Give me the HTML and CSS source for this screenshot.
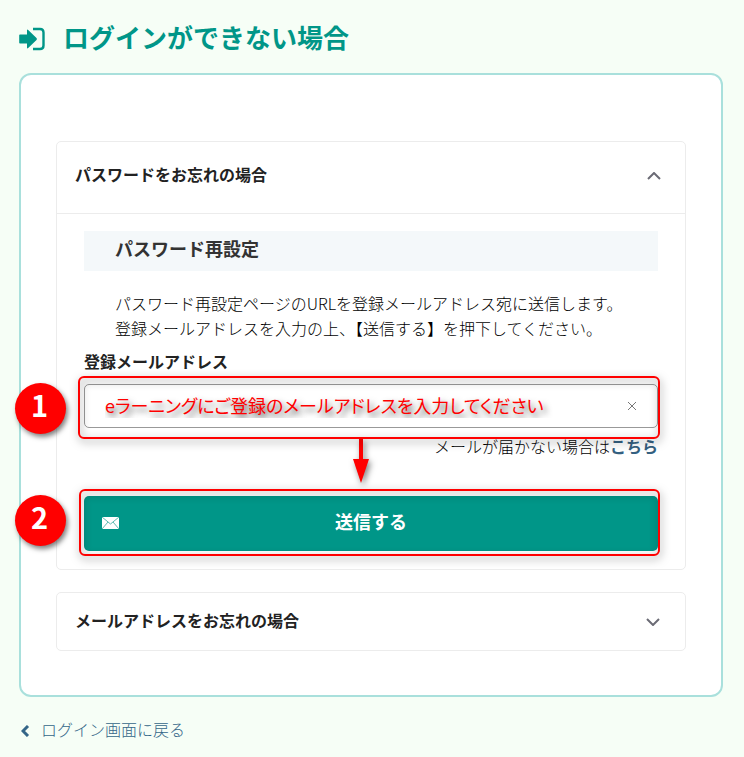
FILE: index.html
```html
<!DOCTYPE html>
<html lang="ja">
<head>
  <meta charset="UTF-8">
  <title>ログインができない場合</title>
  <meta name="viewport" content="width=device-width, initial-scale=1.0">
  <link rel="stylesheet" href="styles.css">
</head>
<body>
  <header class="page-header">
    <svg class="login-icon" viewBox="0 0 26 24" aria-hidden="true">
      <path d="M1 7.500h7V3.500q0-1.500 1.200-.5l8.300 8q.9 1 0 2l-8.300 8q-1.200 1-1.200-.5V16.500H1q-.8 0-.8-.8V8.300Q.2 7.500 1 7.500z" fill="#009688"/>
      <path d="M14 2h7q3.500 0 3.500 3.500v13q0 3.500-3.500 3.500H14" fill="none" stroke="#009688" stroke-width="2.400"/>
    </svg>
    <h1>ログインができない場合</h1>
  </header>
  <main class="card">
    <section class="item">
      <h2>
        <button type="button" class="item-head open" aria-expanded="true">
          パスワードをお忘れの場合
          <svg class="chevron" viewBox="0 0 14 8" aria-hidden="true"><path d="M1 7l6-6 6 6"/></svg>
        </button>
      </h2>
      <form class="item-body">
        <h3>パスワード再設定</h3>
        <p class="lead">パスワード再設定ページのURLを登録メールアドレス宛に送信します。<br>登録メールアドレスを入力の上、【送信する】を押下してください。</p>
        <label for="email">登録メールアドレス</label>
        <div class="field marked">
          <input type="email" id="email" placeholder="eラーニングにご登録のメールアドレスを入力してください">
          <button type="reset" class="clear" aria-label="クリア">
            <svg viewBox="0 0 10 10" aria-hidden="true"><path d="M1 1l8 8M9 1L1 9"/></svg>
          </button>
          <span class="badge">1</span>
          <svg class="arrow" viewBox="0 0 18 44" aria-hidden="true"><path d="M7 0h4v20h6L9 44 1 20h6z"/></svg>
        </div>
        <p class="help">メールが届かない場合は<a href="#">こちら</a></p>
        <div class="submit marked">
          <button type="button" class="send">
            <svg class="mail" viewBox="0 0 17 12" aria-hidden="true">
              <path d="M0 0h17v12H0z" fill="#fff"/>
              <path d="M0 0l8.500 7L17 0M0 12l6-7M17 12l-6-7" fill="none" stroke="#5fbcb3"/>
            </svg>
            送信する
          </button>
          <span class="badge">2</span>
        </div>
      </form>
    </section>
    <section class="item">
      <h2>
        <button type="button" class="item-head" aria-expanded="false">
          メールアドレスをお忘れの場合
          <svg class="chevron" viewBox="0 0 14 8" aria-hidden="true"><path d="M1 1l6 6 6-6"/></svg>
        </button>
      </h2>
    </section>
  </main>
  <footer>
    <a href="#" class="back">
      <svg viewBox="0 0 9 12" aria-hidden="true"><path d="M7 1L2 6l5 5"/></svg>
      ログイン画面に戻る
    </a>
  </footer>
</body>
</html>
```
FILE: styles.css
```css
* {
  box-sizing: border-box;
}
body {
  margin: 0;
  padding: 19px 21px 12px 19px;
  background: #f6fef6;
  color: #222;
  font-family: "Noto Sans CJK JP", sans-serif;
  font-size: 16px;
  line-height: 25px;
}
h1, h2, h3, p {
  margin: 0;
}
button, input {
  font: inherit;
  color: inherit;
}
button {
  cursor: pointer;
}
.page-header {
  display: flex;
  align-items: center;
  gap: 18px;
  color: #009688;
}
.login-icon {
  width: 26px;
  height: 24px;
  margin-top: 4px;
}
h1 {
  font-size: 26px;
  line-height: 36px;
}
.card {
  margin-top: 18px;
  padding: 66px 35px 44px;
  background: #fff;
  border: 2px solid #a9e0dc;
  border-radius: 12px;
}
.item {
  border: 1px solid #ececec;
  border-radius: 5px;
}
.item + .item {
  margin-top: 22px;
}
h2 {
  font-size: 16px;
}
.item-head {
  display: flex;
  justify-content: space-between;
  align-items: center;
  width: 100%;
  padding: 15px 25px 17px 18px;
  border: none;
  background: none;
  font-weight: bold;
  text-align: left;
}
.item-head.open {
  padding: 20px 24px 26px 18px;
  border-bottom: 1px solid #ececec;
}
.chevron {
  width: 14px;
  height: 8px;
  margin-top: 2px;
  fill: none;
  stroke: #6b6b75;
  stroke-width: 2;
}
.item-body {
  padding: 17px 27px 18px;
}
h3 {
  padding: 5px 31px 10px;
  background: #f4f8fa;
  color: #333;
  font-size: 18px;
}
.lead {
  padding: 20px 0 0 31px;
  color: #000;
  font-weight: 300;
  white-space: nowrap;
}
label {
  display: block;
  margin-top: 8px;
  font-weight: bold;
}
.marked {
  position: relative;
}
.field {
  margin-top: 10px;
}
/* red frames laid over the controls */
.marked::after {
  content: "";
  position: absolute;
  inset: -8px -2px -11px -6px;
  border: 2px solid #f00;
  border-radius: 6px;
  filter: drop-shadow(1px 3px 4px rgba(0,0,0,0.5));
  pointer-events: none;
}
.submit.marked::after {
  inset: -7px -2px -5px -5px;
}
.field input {
  display: block;
  width: 100%;
  height: 44px;
  padding: 0 44px 0 20px;
  border: 1px solid #999;
  border-radius: 5px;
  background: #fff;
}
.field input::placeholder {
  color: #f00;
  opacity: 1;
  font-size: 18px;
  font-feature-settings: "palt";
  text-shadow: 3px 4px 6px rgba(0,0,0,0.7);
}
.clear {
  position: absolute;
  top: 12px;
  right: 16px;
  display: flex;
  padding: 5px;
  border: none;
  background: none;
}
.clear svg {
  width: 10px;
  height: 10px;
  stroke: #777;
}
.badge {
  position: absolute;
  top: -1px;
  left: -69px;
  width: 51px;
  height: 51px;
  padding-right: 2px;
  border-radius: 50%;
  background: #f00;
  box-shadow: 2px 3px 5px rgba(0,0,0,0.5);
  color: #fff;
  font-size: 29px;
  font-weight: bold;
  line-height: 43px;
  text-align: center;
}
.arrow {
  position: absolute;
  top: 55px;
  left: 268px;
  width: 18px;
  height: 44px;
  fill: #f00;
  filter: drop-shadow(2px 3px 3px rgba(0,0,0,0.5));
}
.help {
  margin-top: 6px;
  color: #000;
  font-weight: 300;
  text-align: right;
}
.help a {
  color: #346080;
  font-weight: bold;
  text-decoration: none;
}
.submit {
  margin-top: 37px;
}
.send {
  display: block;
  width: 100%;
  height: 55px;
  padding: 0 0 5px;
  border: none;
  border-radius: 5px;
  background: #009688;
  color: #fff;
  font-size: 18px;
  font-weight: bold;
}
.mail {
  position: absolute;
  top: 21px;
  left: 18px;
  width: 17px;
  height: 12px;
}
footer {
  margin-top: 20px;
}
.back {
  display: inline-flex;
  align-items: center;
  gap: 11px;
  padding-left: 2px;
  color: #346688;
  font-weight: 300;
  text-decoration: none;
}
.back svg {
  width: 9px;
  height: 12px;
  margin-top: 3px;
  fill: none;
  stroke: #346688;
  stroke-width: 3;
}
```
